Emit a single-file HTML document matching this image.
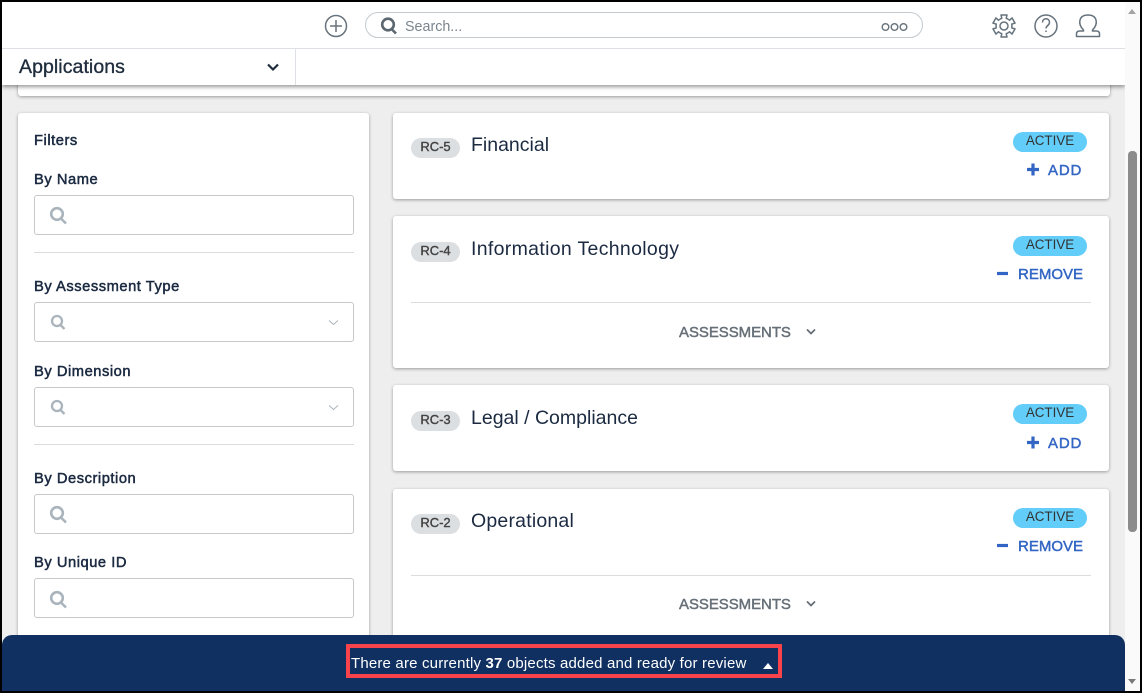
<!DOCTYPE html>
<html><head><meta charset="utf-8">
<style>
*{box-sizing:border-box;margin:0;padding:0}
html,body{width:1142px;height:693px;overflow:hidden;background:#000;font-family:"Liberation Sans",sans-serif}
.a{position:absolute}
.t{position:absolute;white-space:nowrap;line-height:1}
.card{position:absolute;background:#fff;border-radius:3px;box-shadow:0 1px 3px rgba(0,0,0,.35);left:393px;width:716px}
.lab{position:absolute;left:34px;font-size:14.7px;font-weight:400;-webkit-text-stroke:.5px #1b2a41;letter-spacing:.54px;color:#1b2a41;white-space:nowrap;line-height:1}
.inp{position:absolute;left:34px;width:320px;height:40px;border:1px solid #c8c8c8;border-radius:3px;background:#fff}
.rc{position:absolute;left:411px;width:49px;height:20px;background:#dcdfe2;border-radius:10px;color:#444;font-size:13px;-webkit-text-stroke:.4px #444;text-align:center;line-height:18px}
.name{position:absolute;left:471px;font-size:19.5px;color:#1b2a41;white-space:nowrap;line-height:1}
.act{position:absolute;left:1013px;width:74px;height:20px;background:#62cdf8;border-radius:10px;color:#333;font-size:13.4px;text-align:center;line-height:17px}
.btn{position:absolute;color:#3366c4;font-size:15px;-webkit-text-stroke:.45px #3366c4;white-space:nowrap;line-height:1}
.asm{position:absolute;left:679px;color:#666f78;font-size:15px;-webkit-text-stroke:.45px #666f78;letter-spacing:-.06px;white-space:nowrap;line-height:1}
.hr{position:absolute;height:1px;background:#dcdcdc}
svg{position:absolute;overflow:visible}
</style></head>
<body>
<div class="a" style="left:2px;top:2px;width:1123px;height:689px;background:#eee"></div>

<div class="a" style="left:18px;top:70px;width:1092px;height:26px;background:#fff;border-radius:3px;box-shadow:0 1px 3px rgba(0,0,0,.35)"></div>

<div class="a" style="left:18px;top:113px;width:351px;height:560px;background:#fff;border-radius:3px;box-shadow:0 1px 3px rgba(0,0,0,.35)"></div>
<div class="lab" style="top:134px">Filters</div>
<div class="lab" style="top:173px">By Name</div>
<div class="inp" style="top:195px"></div>
<div class="hr" style="left:34px;top:252px;width:320px"></div>
<div class="lab" style="top:280px">By Assessment Type</div>
<div class="inp" style="top:302px"></div>
<div class="lab" style="top:365px">By Dimension</div>
<div class="inp" style="top:387px"></div>
<div class="hr" style="left:34px;top:444px;width:320px"></div>
<div class="lab" style="top:472px">By Description</div>
<div class="inp" style="top:494px"></div>
<div class="lab" style="top:556px">By Unique ID</div>
<div class="inp" style="top:578px"></div>

<svg style="left:0;top:0" width="1142" height="693" fill="none" stroke="#aab4bc">
<g stroke-width="2.6"><circle cx="57" cy="214" r="5.800"/><path d="M61 218.500L66 223.500"/></g>
<g stroke-width="2.3"><circle cx="57" cy="321" r="5"/><path d="M60.500 325L64.500 329"/></g>
<g stroke-width="2.3"><circle cx="57" cy="406" r="5"/><path d="M60.500 410L64.500 414"/></g>
<g stroke-width="2.6"><circle cx="57" cy="513" r="5.800"/><path d="M61 517.500L66 522.500"/></g>
<g stroke-width="2.6"><circle cx="57" cy="598" r="5.800"/><path d="M61 602.500L66 607.500"/></g>
<path d="M329 320.500L333.500 324.500L338 320.500" stroke-width="1"/>
<path d="M329 405.500L333.500 409.500L338 405.500" stroke-width="1"/>
</svg>

<div class="card" style="top:113px;height:86px"></div>
<div class="rc" style="top:138px">RC-5</div>
<div class="name" style="top:136px">Financial</div>
<div class="act" style="top:132px">ACTIVE</div>
<div class="btn" style="left:1048px;top:163px;letter-spacing:.85px">ADD</div>

<div class="card" style="top:216px;height:152px"></div>
<div class="rc" style="top:242px">RC-4</div>
<div class="name" style="top:240px;letter-spacing:.32px">Information Technology</div>
<div class="act" style="top:236px">ACTIVE</div>
<div class="btn" style="left:1018px;top:267px">REMOVE</div>
<div class="hr" style="left:411px;top:302px;width:680px"></div>
<div class="asm" style="top:325px">ASSESSMENTS</div>

<div class="card" style="top:385px;height:86px"></div>
<div class="rc" style="top:411px">RC-3</div>
<div class="name" style="top:409px">Legal / Compliance</div>
<div class="act" style="top:404px">ACTIVE</div>
<div class="btn" style="left:1048px;top:436px;letter-spacing:.85px">ADD</div>

<div class="card" style="top:489px;height:180px"></div>
<div class="rc" style="top:514px">RC-2</div>
<div class="name" style="top:512px;letter-spacing:.2px">Operational</div>
<div class="act" style="top:508px">ACTIVE</div>
<div class="btn" style="left:1018px;top:539px">REMOVE</div>
<div class="hr" style="left:411px;top:575px;width:680px"></div>
<div class="asm" style="top:597px">ASSESSMENTS</div>

<svg style="left:0;top:0" width="1142" height="693" fill="none">
<g stroke="#3366c4" stroke-width="3.200">
<path d="M1027 169.500H1039M1033 163.500V175.500"/><path d="M997 273.500H1008"/>
<path d="M1027 442.500H1039M1033 436.500V448.500"/><path d="M997 545.500H1008"/>
</g>
<g stroke="#666f78" stroke-width="1.800"><path d="M807 329.500L811 333.500L815 329.500"/><path d="M807 601.500L811 605.500L815 601.500"/></g>
</svg>

<div class="a" style="left:2px;top:2px;width:1123px;height:83px;background:#fff;box-shadow:0 2px 4px rgba(0,0,0,.4)"></div>
<div class="a" style="left:2px;top:48px;width:1123px;height:1px;background:#dde0e4"></div>
<div class="a" style="left:295px;top:49px;width:1px;height:36px;background:#dde0e4"></div>
<div class="t" style="left:19px;top:58px;font-size:19.500px;color:#1f2d3d;letter-spacing:.07px;-webkit-text-stroke:.35px #1f2d3d">Applications</div>
<div class="a" style="left:365px;top:12px;width:558px;height:26px;border:1px solid #c5cace;border-radius:13px;background:#fff"></div>
<div class="t" style="left:405px;top:20px;font-size:14.300px;color:#7b858e">Search...</div>

<svg style="left:0;top:0" width="1142" height="693" fill="none" stroke="#66727c">
<circle cx="336" cy="26" r="10.500" stroke-width="1.500"/><path d="M336 20V32M330 26H342" stroke-width="1.500"/>
<circle cx="388" cy="24.500" r="5.800" stroke-width="2.600" stroke="#5a6670"/><path d="M391.500 29L396 33.500" stroke-width="2.600" stroke="#5a6670"/>
<g stroke-width="1.400"><circle cx="885.500" cy="27" r="3.300"/><circle cx="894.500" cy="27" r="3.300"/><circle cx="903.500" cy="27" r="3.300"/></g>
<g stroke-width="1.500" stroke-linejoin="round">
<circle cx="1004" cy="26" r="4"/>
<path d="M1000 19.070L1001.800 18.300L1001 15H1007L1006.200 18.300L1008 19.070"/>
<path transform="rotate(60 1004 26)" d="M1000 19.070L1001.800 18.300L1001 15H1007L1006.200 18.300L1008 19.070"/>
<path transform="rotate(120 1004 26)" d="M1000 19.070L1001.800 18.300L1001 15H1007L1006.200 18.300L1008 19.070"/>
<path transform="rotate(180 1004 26)" d="M1000 19.070L1001.800 18.300L1001 15H1007L1006.200 18.300L1008 19.070"/>
<path transform="rotate(240 1004 26)" d="M1000 19.070L1001.800 18.300L1001 15H1007L1006.200 18.300L1008 19.070"/>
<path transform="rotate(300 1004 26)" d="M1000 19.070L1001.800 18.300L1001 15H1007L1006.200 18.300L1008 19.070"/>
<circle cx="1046" cy="26" r="11"/>
<path d="M1042.500 22.500C1042.500 17.500 1049.500 17.500 1049.500 22.500C1049.500 25.500 1046 25.500 1046 28.500"/>
<path d="M1046 30.500V32"/>
<path d="M1083.500 30C1077.500 24 1078.500 15 1088 15C1097.500 15 1098.500 24 1092.500 30V31H1096.500Q1099.500 31 1099.500 34V36.500H1076.500V34Q1076.500 31 1079.500 31H1083.500Z"/>
</g>
<path d="M268 64.500L273 69.500L278 64.500" stroke="#1f2d3d" stroke-width="2.200"/>
</svg>

<div class="a" style="left:1125px;top:2px;width:15px;height:689px;background:#fafafa"></div>
<div class="a" style="left:1128px;top:151px;width:9px;height:381px;background:#8c8c8c;border-radius:4px"></div>
<div class="a" style="left:1128px;top:9px;width:0;height:0;border-left:4px solid transparent;border-right:4px solid transparent;border-bottom:5px solid #a3a3a3"></div>
<div class="a" style="left:1128px;top:679px;width:0;height:0;border-left:4.500px solid transparent;border-right:4.500px solid transparent;border-top:5px solid #7a7a7a"></div>

<div class="a" style="left:2px;top:635px;width:1123px;height:56px;background:#0f3060;border-radius:10px 10px 0 0"></div>
<div class="a" style="left:346px;top:644px;width:436px;height:34px;border:4px solid #f8434c"></div>
<div class="t" style="left:351px;top:656px;font-size:15px;letter-spacing:.18px;color:#fff">There are currently <b>37</b> objects added and ready for review</div>
<div class="a" style="left:763px;top:663px;width:0;height:0;border-left:5.500px solid transparent;border-right:5.500px solid transparent;border-bottom:6px solid #fff"></div>

<div class="a" style="left:0;top:0;width:1142px;height:2px;background:#000"></div>
<div class="a" style="left:0;top:691px;width:1142px;height:2px;background:#000"></div>
<div class="a" style="left:0;top:0;width:2px;height:693px;background:#000"></div>
<div class="a" style="left:1140px;top:0;width:2px;height:693px;background:#000"></div>
</body></html>
